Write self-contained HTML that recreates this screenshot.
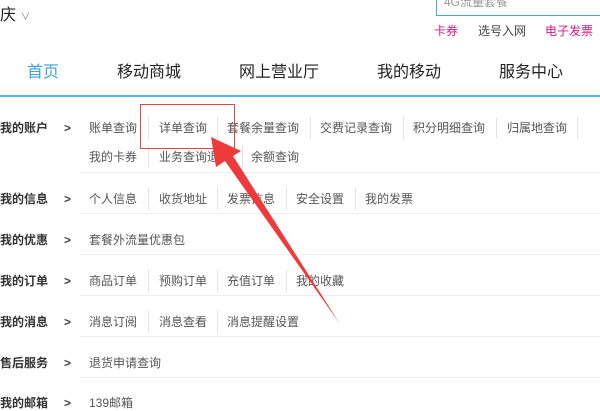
<!DOCTYPE html>
<html><head><meta charset="utf-8"><style>
body{margin:0;width:600px;height:403px;overflow:hidden;background:#fff;font-family:"Liberation Sans","Noto Sans CJK SC",sans-serif;position:relative}
.a{position:absolute;white-space:nowrap;line-height:16px}
.nav{font-size:16px;color:#222;top:65px}
.lbl{left:0;font-size:12px;color:#333;font-weight:bold}
.gt{left:64px;font-size:12px;color:#444;font-weight:bold}
.it{font-size:12px;color:#555}
.sep{position:absolute;width:1px;height:22px;background:#e3e3e3}
.hl{position:absolute;left:80px;right:0;height:1px;background:#eee}
</style></head><body>
<div class="a" style="left:0;top:6px;font-size:16px;line-height:20px;color:#222">庆 <span style="font-size:10px;color:#888">∨</span></div>
<div class="a" style="left:436px;top:-10px;width:164px;height:26px;border:1px solid #4aa6d6;border-right:none;box-sizing:border-box"></div>
<div class="a" style="left:444px;top:-6px;font-size:12px;color:#999">4G流量套餐</div>
<div class="a" style="left:434px;top:23px;font-size:12px;color:#d6197e">卡券</div>
<div class="a" style="left:478px;top:23px;font-size:12px;color:#444">选号入网</div>
<div class="a" style="left:545px;top:23px;font-size:12px;color:#d6197e">电子发票</div>
<div class="a nav" style="left:27px;color:#3ea0dc">首页</div>
<div class="a nav" style="left:117px">移动商城</div>
<div class="a nav" style="left:239px">网上营业厅</div>
<div class="a nav" style="left:377px">我的移动</div>
<div class="a nav" style="left:499px">服务中心</div>
<div class="a" style="left:0;top:95px;width:600px;height:2px;background:#5bb3e0"></div>

<div class="a lbl" style="top:120px">我的账户</div><div class="a gt" style="top:120px">&gt;</div>
<div class="a it" style="top:120px;left:89px">账单查询</div><div class="sep" style="left:148px;top:117px"></div>
<div class="a it" style="top:120px;left:159px">详单查询</div><div class="sep" style="left:217px;top:117px"></div>
<div class="a it" style="top:120px;left:227px">套餐余量查询</div><div class="sep" style="left:310px;top:117px"></div>
<div class="a it" style="top:120px;left:320px">交费记录查询</div><div class="sep" style="left:403px;top:117px"></div>
<div class="a it" style="top:120px;left:413px">积分明细查询</div><div class="sep" style="left:496px;top:117px"></div>
<div class="a it" style="top:120px;left:507px">归属地查询</div><div class="sep" style="left:577px;top:117px"></div>
<div class="a it" style="top:149px;left:89px">我的卡券</div><div class="sep" style="left:148px;top:146px"></div>
<div class="a it" style="top:149px;left:159px">业务查询退订</div><div class="sep" style="left:242px;top:146px"></div>
<div class="a it" style="top:149px;left:251px">余额查询</div>
<div class="hl" style="top:172px"></div>

<div class="a lbl" style="top:191px">我的信息</div><div class="a gt" style="top:191px">&gt;</div>
<div class="a it" style="top:191px;left:89px">个人信息</div><div class="sep" style="left:148px;top:188px"></div>
<div class="a it" style="top:191px;left:159px">收货地址</div><div class="sep" style="left:217px;top:188px"></div>
<div class="a it" style="top:191px;left:227px">发票信息</div><div class="sep" style="left:286px;top:188px"></div>
<div class="a it" style="top:191px;left:296px">安全设置</div><div class="sep" style="left:355px;top:188px"></div>
<div class="a it" style="top:191px;left:365px">我的发票</div>
<div class="hl" style="top:213px"></div>

<div class="a lbl" style="top:232px">我的优惠</div><div class="a gt" style="top:232px">&gt;</div>
<div class="a it" style="top:232px;left:89px">套餐外流量优惠包</div>
<div class="hl" style="top:254px"></div>

<div class="a lbl" style="top:273px">我的订单</div><div class="a gt" style="top:273px">&gt;</div>
<div class="a it" style="top:273px;left:89px">商品订单</div><div class="sep" style="left:148px;top:270px"></div>
<div class="a it" style="top:273px;left:159px">预购订单</div><div class="sep" style="left:217px;top:270px"></div>
<div class="a it" style="top:273px;left:227px">充值订单</div><div class="sep" style="left:286px;top:270px"></div>
<div class="a it" style="top:273px;left:296px">我的收藏</div>
<div class="hl" style="top:295px"></div>

<div class="a lbl" style="top:314px">我的消息</div><div class="a gt" style="top:314px">&gt;</div>
<div class="a it" style="top:314px;left:89px">消息订阅</div><div class="sep" style="left:148px;top:311px"></div>
<div class="a it" style="top:314px;left:159px">消息查看</div><div class="sep" style="left:217px;top:311px"></div>
<div class="a it" style="top:314px;left:227px">消息提醒设置</div>
<div class="hl" style="top:336px"></div>

<div class="a lbl" style="top:355px">售后服务</div><div class="a gt" style="top:355px">&gt;</div>
<div class="a it" style="top:355px;left:89px">退货申请查询</div>
<div class="hl" style="top:377px"></div>

<div class="a lbl" style="top:395px">我的邮箱</div><div class="a gt" style="top:395px">&gt;</div>
<div class="a it" style="top:395px;left:89px">139邮箱</div>

<div class="a" style="left:140px;top:104px;width:95px;height:45px;border:1px solid #e04848;box-sizing:border-box"></div>
<svg class="a" style="left:0;top:0" width="600" height="403"><polygon points="211,137 216,167 225,161 340,324 233,156 241,151" fill="#ee3a3a"/></svg>
</body></html>
